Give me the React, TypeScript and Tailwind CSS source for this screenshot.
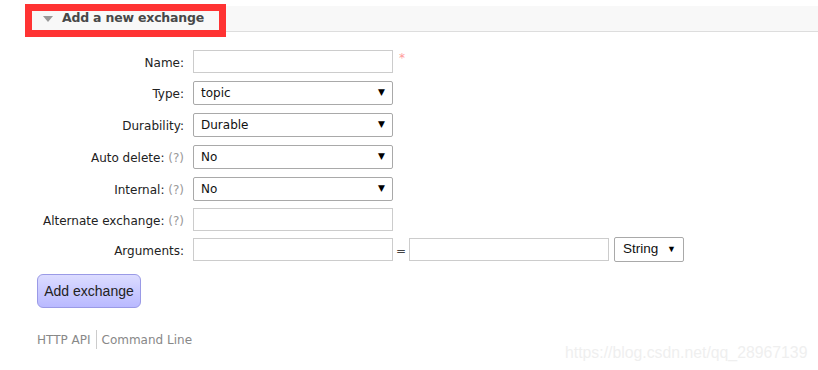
import React from 'react';

const label = 'text-right pr-[9px] w-[193px] shrink-0 text-[12px] text-[#222]';
const help = <span className="text-[#999]">(?)</span>;

function Select({ value, width = 'w-[200px]' }: { value: string; width?: string }) {
  return (
    <div className={`relative ${width} h-[24px] border border-[#a9a9a9] rounded-[2px] bg-white flex items-center pl-[7px] text-[12px] text-[#111]`}>
      {value}
      <span className="absolute right-[7px] top-[6px] text-[9px] leading-none text-black">▼</span>
    </div>
  );
}

function TextInput({ width = 'w-[200px]' }: { width?: string }) {
  return <div className={`${width} h-[23px] border border-[#ccc] bg-white`} />;
}

export default function App() {
  const font = { fontFamily: '"DejaVu Sans", Verdana, sans-serif' };

  return (
    <div className="relative w-[818px] h-[370px] bg-white overflow-hidden" style={font}>
      {/* section header */}
      <div className="pt-[6px] pl-[32px]">
        <div className="h-[26px] bg-[#f8f8f8] border-b border-[#ddd] flex items-center pl-[11px] gap-[9px]">
          <span className="w-0 h-0 border-l-[5px] border-r-[5px] border-t-[6px] border-l-transparent border-r-transparent border-t-[#999]" />
          <span className="text-[12.5px] font-bold text-[#484848] tracking-[-0.2px]">Add a new exchange</span>
        </div>
      </div>

      {/* red annotation box */}
      <div className="absolute left-[25px] top-[4px] w-[201px] h-[33px] border-[7px] border-[#f33]" />

      {/* form */}
      <div className="mt-[13px] flex flex-col">
        <div className="h-[32px] flex items-center">
          <div className={`${label} pt-[4px]`}>Name:</div>
          <TextInput />
          <span className="ml-[6px] -mt-[6px] text-[12px] text-[#f99]">*</span>
        </div>
        <div className="h-[32px] flex items-center">
          <div className={`${label} pt-[2px]`}>Type:</div>
          <Select value="topic" />
        </div>
        <div className="h-[32px] flex items-center">
          <div className={`${label} pt-[2px]`}>Durability:</div>
          <Select value="Durable" />
        </div>
        <div className="h-[32px] flex items-center">
          <div className={`${label} pt-[2px]`}>Auto delete: {help}</div>
          <Select value="No" />
        </div>
        <div className="h-[32px] flex items-center">
          <div className={`${label} pt-[2px]`}>Internal: {help}</div>
          <Select value="No" />
        </div>
        <div className="h-[28px] flex items-center">
          <div className={`${label} pt-[4px]`}>Alternate exchange: {help}</div>
          <TextInput />
        </div>
        <div className="h-[32px] flex items-center">
          <div className={`${label} pt-[4px]`}>Arguments:</div>
          <TextInput />
          <span className="w-[16px] pt-[3px] text-center text-[12px] text-[#444]">=</span>
          <TextInput />
          <div className="ml-[5px]" style={{ fontFamily: '"Liberation Sans", Arial, sans-serif' }}>
            <div className="relative w-[70px] h-[25px] border border-[#a9a9a9] rounded-[2px] bg-white flex items-center pl-[8px] text-[13.5px] text-[#111]">
              String
              <span className="absolute right-[7px] top-[7px] text-[9px] leading-none text-black">▼</span>
            </div>
          </div>
        </div>
      </div>

      {/* submit */}
      <div className="pl-[37px] mt-[9px]">
        <button
          className="h-[34px] w-[104px] whitespace-nowrap rounded-[6px] border border-[#9a9ae6] bg-gradient-to-b from-[#dcdcff] to-[#b9b9ff] text-[14px] text-[#222]"
          style={{ fontFamily: '"Liberation Sans", Arial, sans-serif' }}
        >
          Add exchange
        </button>
      </div>

      {/* footer links */}
      <div className="pl-[37px] mt-[22px] flex items-center text-[12px] text-[#888]">
        <span>HTTP API</span>
        <span className="mx-[5px] w-px h-[19px] bg-[#ccc]" />
        <span>Command Line</span>
      </div>

      {/* watermark */}
      <div
        className="absolute left-[565px] top-[341px] text-[15.8px] text-[#efefef]"
        style={{ fontFamily: '"Liberation Sans", Arial, sans-serif' }}
      >
        https://blog.csdn.net/qq_28967139
      </div>
    </div>
  );
}
